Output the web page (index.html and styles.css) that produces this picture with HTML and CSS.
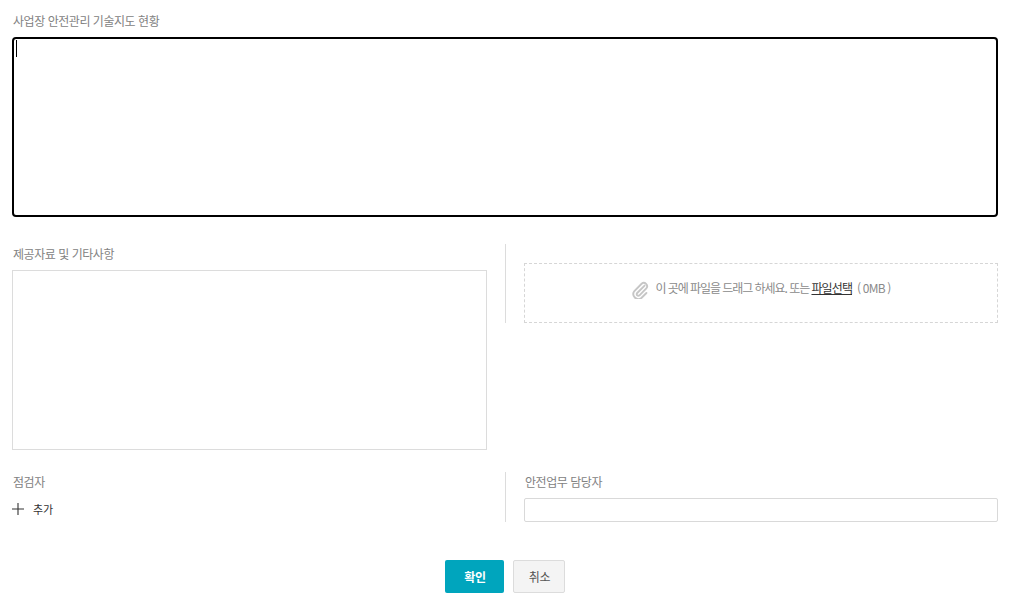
FILE: index.html
```html
<!DOCTYPE html>
<html lang="ko">
<head>
<meta charset="utf-8">
<title>안전관리 기술지도</title>
<link rel="stylesheet" href="styles.css">
</head>
<body>
<form class="page">
  <section class="status">
    <label class="label status-label">사업장 안전관리 기술지도 현황</label>
    <div class="status-box">
      <textarea class="status-input"></textarea>
      <span class="caret"></span>
    </div>
  </section>
  <section class="materials">
    <div class="col-left">
      <label class="label materials-label">제공자료 및 기타사항</label>
      <textarea class="plain-area"></textarea>
    </div>
    <div class="col-right upload-col">
      <div class="dropzone">
        <svg class="clip" width="18" height="18" viewBox="0 0 18 18" fill="none" stroke="#c6c6c6" stroke-width="1.9" stroke-linecap="round">
          <path d="M13.6 4.6 6.2 12a1.6 1.6 0 0 0 2.3 2.3l6.8-6.9a3.3 3.3 0 0 0-4.7-4.6L3.4 10a5 5 0 0 0 7 7l5-5"/>
        </svg>
        <span class="drop-text">이 곳에 파일을 드래그 하세요. 또는 <a class="file-link">파일선택</a><span class="size">( 0MB )</span></span>
      </div>
    </div>
  </section>
  <section class="people">
    <div class="col-left">
      <label class="label inspector-label">점검자</label>
      <button type="button" class="add">
        <svg width="12" height="12" viewBox="0 0 12 12" stroke="#333" stroke-width="1.1"><path d="M6 0v12M0 6h12"/></svg>
        <span>추가</span>
      </button>
    </div>
    <div class="col-right manager-col">
      <label class="label manager-label">안전업무 담당자</label>
      <input class="text-input" type="text">
    </div>
  </section>
  <div class="actions">
    <button type="button" class="btn btn-primary">확인</button>
    <button type="button" class="btn btn-cancel">취소</button>
  </div>
</form>
</body>
</html>
```
FILE: styles.css
```css
* { box-sizing: border-box; }
html, body { margin: 0; padding: 0; background: #fff; }
body {
  font-family: "Noto Sans CJK KR", "Noto Sans", sans-serif;
  font-size: 12px;
  color: #888;
  overflow: hidden;
}
.page { width: 1015px; height: 612px; padding: 0 17px 0 12px; }
.label {
  display: block;
  font-size: 12px;
  line-height: 18px;
  letter-spacing: -0.46px;
  color: #828282;
}
.status-label { padding-top: 12px; height: 37px; padding-left: 1px; }
.status-box { position: relative; height: 180px; }
.status-input {
  display: block;
  width: 100%;
  height: 180px;
  border: 2px solid #000;
  border-radius: 4px;
  outline: none;
  resize: none;
  background: #fff;
}
.caret {
  position: absolute;
  left: 4px;
  top: 3px;
  width: 1px;
  height: 17px;
  background: #000;
}
.materials {
  display: grid;
  grid-template-columns: 493px 493px;
  margin-top: 27px;
  height: 206px;
}
.col-left { padding-right: 18px; }
.materials-label { padding-top: 1px; height: 26px; padding-left: 1px; }
.plain-area {
  display: block;
  width: 475px;
  height: 180px;
  border: 1px solid #dcdcdc;
  outline: none;
  resize: none;
  background: #fff;
}
.col-right { border-left: 1px solid #dcdcdc; padding-left: 18px; }
.upload-col { height: 79px; padding-top: 19px; }
.dropzone {
  display: flex;
  align-items: center;
  justify-content: center;
  height: 60px;
  border: 1px dashed #d6d6d6;
  padding-bottom: 10px;
}
.clip { margin-right: 6px; margin-top: 4px; }
.drop-text { letter-spacing: -1.05px; color: #8a8a8a; line-height: 18px; }
.file-link { color: #333; text-decoration: underline; letter-spacing: -0.9px; }
.size { margin-left: 5px; letter-spacing: -0.8px; }
.people {
  display: grid;
  grid-template-columns: 493px 493px;
  margin-top: 22px;
  height: 50px;
}
.inspector-label { height: 18px; margin-top: 1px; padding-left: 1px; }
.add {
  display: flex;
  align-items: center;
  gap: 9px;
  padding: 0;
  margin-top: 10px;
  border: 0;
  background: none;
  font: inherit;
  font-size: 11px;
  line-height: 16px;
  color: #333;
  letter-spacing: -0.2px;
}
.manager-col { padding-top: 1px; }
.manager-label { height: 25px; padding-left: 1px; }
.text-input {
  display: block;
  width: 474px;
  height: 24px;
  border: 1px solid #d9d9d9;
  border-radius: 2px;
  outline: none;
  background: #fff;
}
.actions {
  display: flex;
  justify-content: center;
  gap: 9px;
  margin-top: 38px;
  padding-right: 1px;
}
.btn {
  height: 33px;
  padding: 0 0 0 2px;
  font-family: inherit;
  font-size: 12px;
  letter-spacing: -0.2px;
  border-radius: 2px;
}
.btn-primary {
  width: 59px;
  border: 0;
  background: #00a5bd;
  color: #fff;
  font-weight: 700;
}
.btn-cancel {
  width: 52px;
  border: 1px solid #dcdcdc;
  background: #f4f4f4;
  color: #555;
}
```
